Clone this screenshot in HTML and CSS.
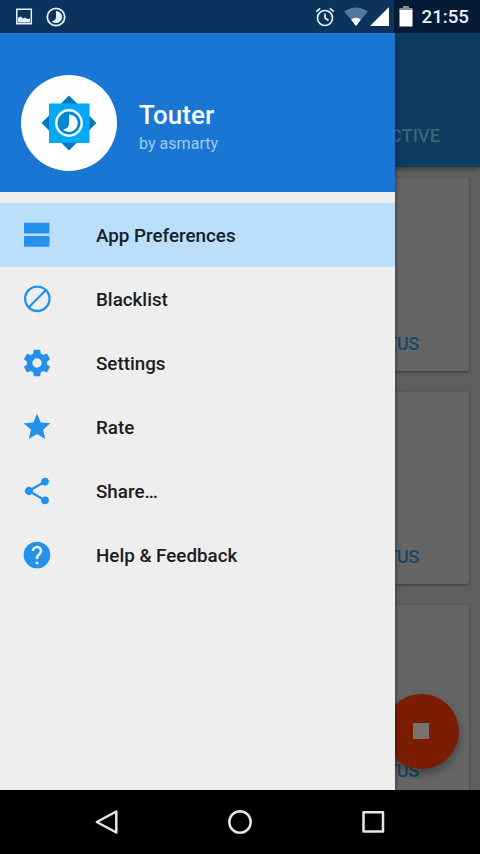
FILE: index.html
```html
<!DOCTYPE html>
<html lang="en">
<head>
<meta charset="utf-8">
<title>Touter</title>
<link rel="stylesheet" href="styles.css">
</head>
<body>
<div class="phone">
  <main class="app">
    <header class="toolbar"><span class="tab">ACTIVE</span></header>
    <section class="cards">
      <article class="card"><span class="status">STATUS</span></article>
      <article class="card"><span class="status">STATUS</span></article>
      <article class="card"><span class="status">STATUS</span></article>
    </section>
    <button class="fab" aria-label="Stop"><span class="stop"></span></button>
  </main>

  <aside class="drawer">
    <header class="profile">
      <div class="avatar">
        <svg width="96" height="96" viewBox="0 0 96 96">
          <path fill="#0277bd" d="M48 20.500 75.500 48 48 75.500 20.500 48z"/>
          <path fill="#03a9f4" d="M28 28.500h40.500V68H28z"/>
          <circle cx="48" cy="48" r="12.700" fill="#0288d1" stroke="#f4fbff" stroke-width="2.500"/>
          <path fill="#f4fbff" d="M48 39.500a8.700 8.700 0 1 1-6 15q6-1 6-6.500z"/>
        </svg>
      </div>
      <div class="who">
        <h1 class="name">Touter</h1>
        <p class="author">by asmarty</p>
      </div>
    </header>
    <nav class="menu">
      <a class="item selected">
        <svg class="icon" viewBox="0 0 32 32"><rect x="3" y="3.800" width="25.500" height="10.800" rx="1"/><rect x="3" y="17" width="25.500" height="10.800" rx="1"/></svg>
        <span class="label">App Preferences</span>
      </a>
      <a class="item">
        <svg class="icon line" viewBox="0 0 32 32"><circle cx="16.300" cy="15.800" r="12.200"/><path d="M7.800 24.300 24.800 7.300"/></svg>
        <span class="label">Blacklist</span>
      </a>
      <a class="item">
        <svg class="icon" viewBox="0 0 24 24"><path d="M19.430 12.980c.04-.32.070-.64.070-.98s-.030-.66-.070-.98l2.110-1.650c.19-.15.240-.42.120-.64l-2-3.460c-.12-.22-.39-.3-.61-.22l-2.490 1c-.52-.4-1.080-.73-1.690-.98l-.38-2.650A.488.488 0 0 0 14 2h-4c-.25 0-.46.180-.49.420l-.38 2.650c-.61.250-1.170.590-1.690.980l-2.490-1c-.23-.09-.49 0-.61.220l-2 3.460c-.13.220-.07.490.12.640l2.110 1.650c-.04.320-.07.650-.07.980s.030.660.070.980l-2.110 1.650c-.19.150-.24.420-.12.640l2 3.460c.12.220.390.300.610.220l2.490-1c.52.400 1.080.730 1.690.980l.38 2.650c.03.240.240.420.490.420h4c.25 0 .46-.18.490-.42l.38-2.650c.61-.25 1.170-.59 1.690-.98l2.490 1c.23.090.490 0 .610-.22l2-3.460c.12-.22.070-.49-.12-.64zM12 15.500a3.500 3.500 0 1 1 0-7 3.500 3.500 0 0 1 0 7z"/></svg>
        <span class="label">Settings</span>
      </a>
      <a class="item">
        <svg class="icon" viewBox="0 0 24 24"><path d="M12 17.270 18.180 21l-1.640-7.030L22 9.240l-7.190-.61L12 2 9.190 8.630 2 9.240l5.460 4.730L5.820 21z"/></svg>
        <span class="label">Rate</span>
      </a>
      <a class="item">
        <svg class="icon" viewBox="0 0 24 24"><path d="M18 16.080c-.76 0-1.440.300-1.960.770L8.910 12.700c.05-.23.090-.46.090-.7s-.040-.47-.090-.7l7.050-4.110A3 3 0 1 0 15 5c0 .24.040.47.090.700L8.040 9.810A3 3 0 1 0 8.040 14.190l7.120 4.160c-.05.210-.08.430-.08.650a2.920 2.920 0 1 0 2.920-2.920z"/></svg>
        <span class="label">Share…</span>
      </a>
      <a class="item">
        <svg class="icon" viewBox="0 0 24 24"><path d="M12 2a10 10 0 1 0 0 20 10 10 0 0 0 0-20zm1 17h-2v-2h2zm2.070-7.750-.9.920C13.450 12.900 13 13.500 13 15h-2v-.5c0-1.100.450-2.100 1.170-2.830l1.240-1.260c.37-.36.590-.86.590-1.410a2 2 0 1 0-4 0H8a4 4 0 1 1 8 0c0 .88-.36 1.680-.93 2.250z"/></svg>
        <span class="label">Help &amp; Feedback</span>
      </a>
    </nav>
  </aside>

  <header class="statusbar">
    <svg class="notice" width="20" height="20" viewBox="0 0 20 20"><path fill="none" stroke="#e3f1fb" stroke-width="1.500" d="M2.800 2.300h14.500v14.500H2.800z"/><path fill="#e3f1fb" d="M4 15.500v-4.500l2.500-1.500 2.500 2 2-1 2.500 1.500 2.500-.5v4z"/></svg>
    <svg class="notice" width="20" height="20" viewBox="0 0 20 20"><circle cx="10" cy="10" r="8.700" fill="none" stroke="#e3f1fb" stroke-width="1.800"/><path fill="#e3f1fb" d="M10 4a6 6 0 1 1-4.200 10.200Q10 13.500 10 10z"/></svg>
    <div class="system">
      <svg width="20" height="22" viewBox="0 0 20 22"><g fill="none" stroke="#e3f1fb" stroke-width="1.700"><circle cx="10" cy="12" r="7.500"/><path d="M10 7.500V12l3.500 2.500M1.200 5.700 5.200 2.300M18.800 5.700 14.800 2.300"/></g></svg>
      <svg class="wifi" width="24" height="20" viewBox="0 0 24 20"><path fill="#54799f" d="M.3 4.500Q12-3.500 23.700 4.500L12 19z"/><path fill="#fff" d="M7.200 12.500q4.800-3.500 9.600 0L12 19z"/></svg>
      <svg class="signal" width="19" height="19" viewBox="0 0 19 19"><path fill="#fff" d="M19 0v19H0z"/></svg>
      <svg class="battery" width="14" height="21" viewBox="0 0 14 21"><path fill="#858c9b" d="M4 0h6v2h3.500v4H.5V2H4z"/><path fill="#fff" d="M.5 4h13v16.500H.5z"/></svg>
      <time class="clock">21:55</time>
    </div>
  </header>

  <footer class="navbar">
    <svg viewBox="0 0 28 28"><path d="M23.300 3.500v21L3.800 14z"/></svg>
    <svg viewBox="0 0 28 28"><circle cx="14" cy="14" r="10.700"/></svg>
    <svg viewBox="0 0 28 28"><path d="M4.500 4.300H24v19.200H4.500z"/></svg>
  </footer>
</div>
</body>
</html>
```
FILE: styles.css
```css
* { box-sizing: border-box; }

body {
  margin: 0;
  font-family: Roboto, "Liberation Sans", sans-serif;
  font-weight: 500;
}

.phone {
  display: grid;
  grid-template: 33px 757px 64px / 394.5px 1fr;
  width: 480px;
  height: 854px;
  overflow: hidden;
  background: #000;
}

.statusbar {
  grid-area: 1 / 1 / 2 / 3;
  display: flex;
  align-items: center;
  gap: 12px;
  padding: 0 11px 0 14px;
  background: linear-gradient(90deg, #0c335d 394.5px, #051a33 394.5px);
}

.system {
  display: flex;
  align-items: center;
  margin-left: auto;
}

.wifi { margin-left: 9px; }
.signal { margin-left: 2px; }
.battery { margin-left: 10px; }

.clock {
  margin-left: 9px;
  padding-top: 2px;
  color: #e9f1fb;
  font-size: 18.700px;
  line-height: 31px;
}

.app {
  grid-area: 2 / 1 / 3 / 3;
  position: relative;
  display: flex;
  flex-direction: column;
  min-height: 0;
  overflow: hidden;
  background: #5f5f5f;
}

.toolbar {
  display: flex;
  flex: none;
  justify-content: flex-end;
  align-items: flex-end;
  height: 134px;
  padding: 0 40px 20px 0;
  background: #0c3c60;
  box-shadow: 0 2px 5px #0006;
}

.tab {
  color: #3d627b;
  font-size: 18.300px;
  line-height: 22px;
}

.cards {
  display: flex;
  flex-direction: column;
  gap: 21px;
  padding: 11px 11px 0;
}

.card {
  display: flex;
  flex: none;
  justify-content: flex-end;
  align-items: flex-end;
  height: 192.500px;
  padding: 0 50px 16px 0;
  border-radius: 3px;
  background: #656565;
  box-shadow: 0 1px 3px #0006;
}

.status {
  color: #164769;
  font-size: 18.300px;
  letter-spacing: -0.4px;
  line-height: 22px;
}

.fab {
  position: absolute;
  right: 21px;
  bottom: 21px;
  display: grid;
  place-items: center;
  width: 75px;
  height: 75px;
  padding: 0 1px 1px 0;
  border: 0;
  border-radius: 50%;
  background: #7a1d03;
  box-shadow: 0 5px 10px #0005;
}

.stop {
  width: 16px;
  height: 16px;
  background: #777270;
}

.drawer {
  grid-area: 2 / 1;
  z-index: 1;
  background: #eee;
  box-shadow: 0 0 5px #0008;
  clip-path: inset(0 -8px 0 0);
}

.profile {
  display: flex;
  align-items: center;
  gap: 22px;
  height: 159px;
  padding: 20px 21px 0;
  background: #1976d2;
}

.avatar {
  flex: none;
  width: 96px;
  height: 96px;
  border-radius: 50%;
  background: #fff;
}

.who { padding-top: 10px; }

.name {
  margin: 0;
  color: #f5fbff;
  font-size: 26px;
  font-weight: 500;
  line-height: 32px;
}

.author {
  margin: 0;
  color: #9fccf5;
  font-size: 16.100px;
  font-weight: 400;
  line-height: 25px;
}

.menu { padding-top: 11px; }

.item {
  display: flex;
  align-items: center;
  gap: 43px;
  height: 64px;
  padding-left: 21px;
  color: #1c1c1c;
  font-size: 18.800px;
}

.label { padding-top: 2px; }

.selected { background: #bbdefb; color: #13202d; }

.icon {
  width: 32px;
  height: 32px;
  fill: #2590e9;
}

.line { fill: none; stroke: #2590e9; stroke-width: 2.300; }

.navbar {
  grid-area: 3 / 1 / 4 / 3;
  z-index: 2;
  display: flex;
  align-items: center;
  justify-content: center;
  gap: 105px;
  background: #000;
}

.navbar svg {
  width: 28px;
  height: 28px;
  fill: none;
  stroke: #e6e6e6;
  stroke-width: 2.500;
  stroke-linejoin: round;
}
```
